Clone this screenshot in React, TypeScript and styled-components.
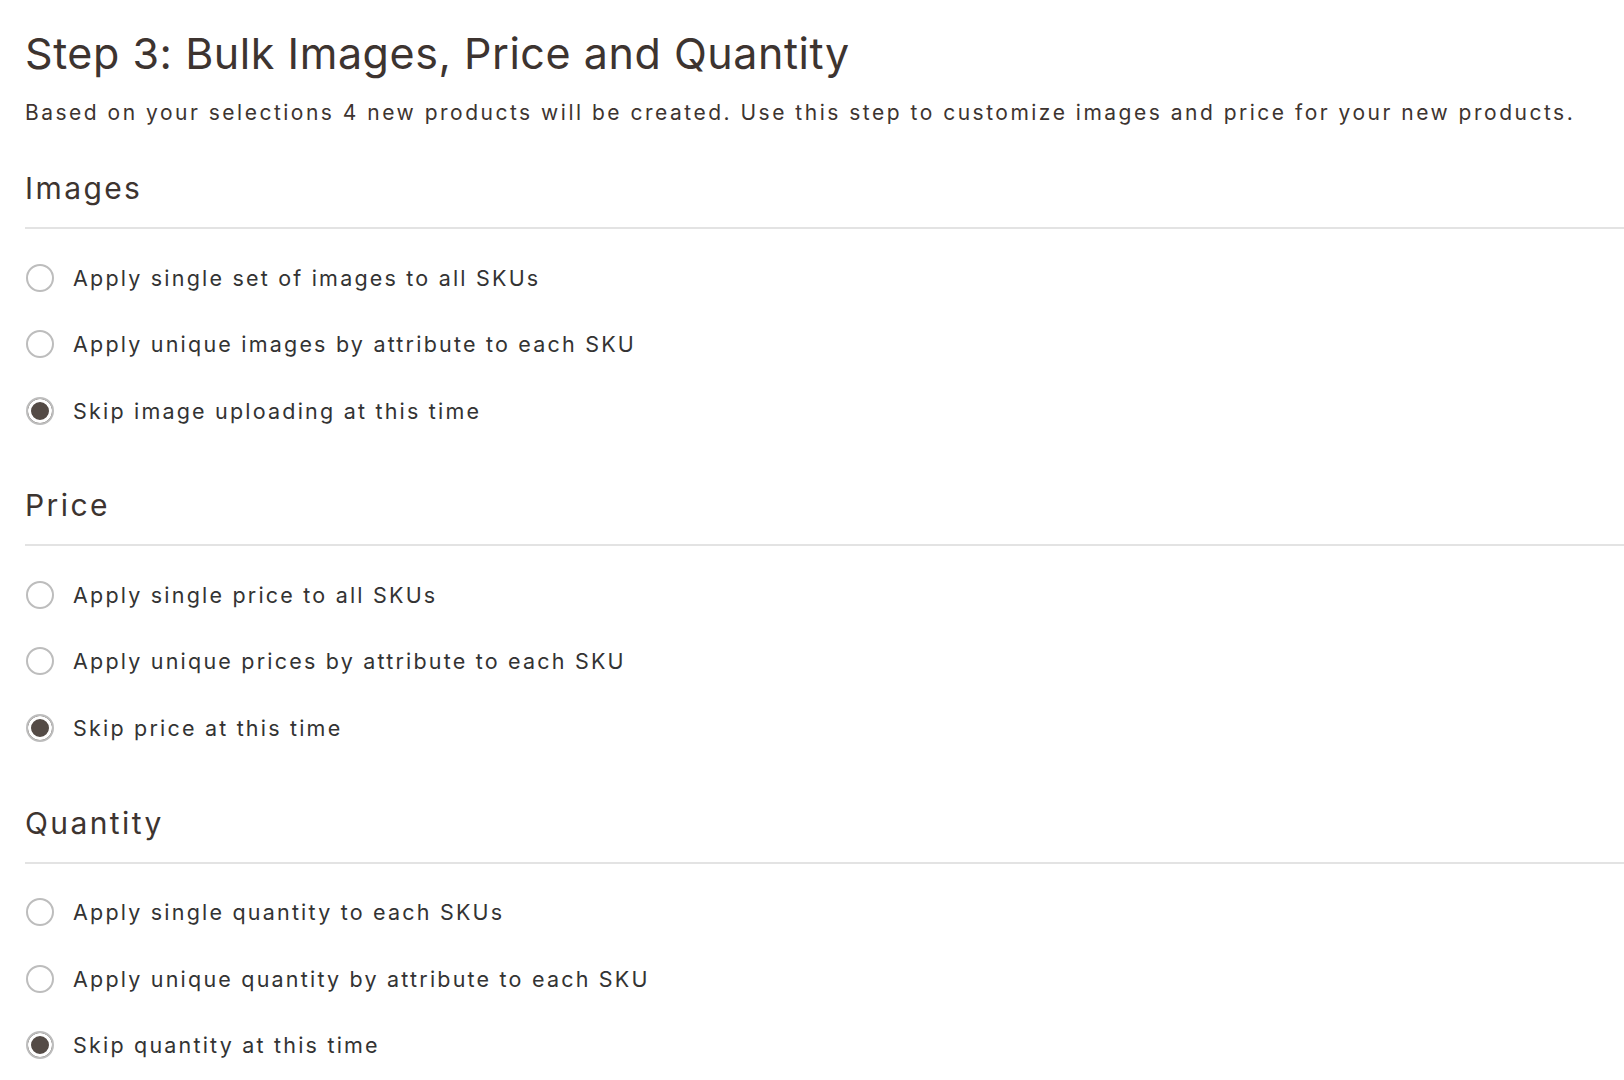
import React, { useState } from 'react';
import styled, { createGlobalStyle } from 'styled-components';

const GlobalStyle = createGlobalStyle`
  html, body {
    margin: 0;
    padding: 0;
    background: #ffffff;
  }
  body {
    font-family: Inter, "Noto Sans", "Liberation Sans", sans-serif;
    color: #3d3430;
  }
`;

interface Option {
  id: string;
  label: string;
}

interface SectionData {
  name: string;
  title: string;
  options: Option[];
  initial: string;
}

const sections: SectionData[] = [
  {
    name: 'images',
    title: 'Images',
    options: [
      { id: 'single', label: 'Apply single set of images to all SKUs' },
      { id: 'unique', label: 'Apply unique images by attribute to each SKU' },
      { id: 'skip', label: 'Skip image uploading at this time' },
    ],
    initial: 'skip',
  },
  {
    name: 'price',
    title: 'Price',
    options: [
      { id: 'single', label: 'Apply single price to all SKUs' },
      { id: 'unique', label: 'Apply unique prices by attribute to each SKU' },
      { id: 'skip', label: 'Skip price at this time' },
    ],
    initial: 'skip',
  },
  {
    name: 'quantity',
    title: 'Quantity',
    options: [
      { id: 'single', label: 'Apply single quantity to each SKUs' },
      { id: 'unique', label: 'Apply unique quantity by attribute to each SKU' },
      { id: 'skip', label: 'Skip quantity at this time' },
    ],
    initial: 'skip',
  },
];

function OptionSection(props: { section: SectionData }): React.ReactElement {
  const { section } = props;
  const [value, setValue] = useState<string>(section.initial);
  return (
    <Section>
      <SectionTitle>{section.title}</SectionTitle>
      <OptionList>
        {section.options.map((option) => (
          <OptionRow key={option.id}>
            <RadioInput
              type="radio"
              name={section.name}
              value={option.id}
              checked={value === option.id}
              onChange={() => setValue(option.id)}
            />
            <OptionLabel>{option.label}</OptionLabel>
          </OptionRow>
        ))}
      </OptionList>
    </Section>
  );
}

export default function App(): React.ReactElement {
  return (
    <Page>
      <GlobalStyle />
      <Title>Step 3: Bulk Images, Price and Quantity</Title>
      <Description>
        Based on your selections 4 new products will be created. Use this step to customize images and price for your
        new products.
      </Description>
      <Sections>
        {sections.map((section) => (
          <OptionSection key={section.name} section={section} />
        ))}
      </Sections>
    </Page>
  );
}

const Page = styled.div`
  padding: 28px 0 40px 25px;
`;

const Title = styled.h1`
  margin: 0;
  font-size: 43px;
  line-height: 50px;
  font-weight: 400;
  letter-spacing: 0.55px;
  color: #3d3430;
`;

const Description = styled.p`
  margin: 21px 0 0;
  font-size: 21px;
  line-height: 28px;
  letter-spacing: 2.5px;
  color: #3d3430;
  white-space: nowrap;
`;

const Sections = styled.div`
  display: flex;
  flex-direction: column;
  gap: 43.5px;
  margin-top: 43px;
`;

const Section = styled.section`
  display: flex;
  flex-direction: column;
`;

const SectionTitle = styled.h2`
  margin: 0;
  padding-bottom: 21px;
  border-bottom: 2px solid #e3e3e3;
  font-size: 30px;
  line-height: 36px;
  font-weight: 400;
  letter-spacing: 2.4px;
  color: #3d3430;
`;

const OptionList = styled.div`
  display: flex;
  flex-direction: column;
  margin-top: 15.25px;
`;

const OptionRow = styled.label`
  display: flex;
  align-items: center;
  gap: 19px;
  height: 66.5px;
  cursor: pointer;
`;

const RadioInput = styled.input`
  appearance: none;
  margin: 0 0 0 1px;
  flex: none;
  width: 28px;
  height: 28px;
  border: 2px solid #bdbdbd;
  border-radius: 50%;
  background: #ffffff;
  box-sizing: border-box;
  cursor: pointer;

  &:checked {
    background: #544b46;
    box-shadow: inset 0 0 0 3px #ffffff;
  }
`;

const OptionLabel = styled.span`
  font-size: 21.5px;
  line-height: 28px;
  letter-spacing: 2.2px;
  color: #333333;
`;
